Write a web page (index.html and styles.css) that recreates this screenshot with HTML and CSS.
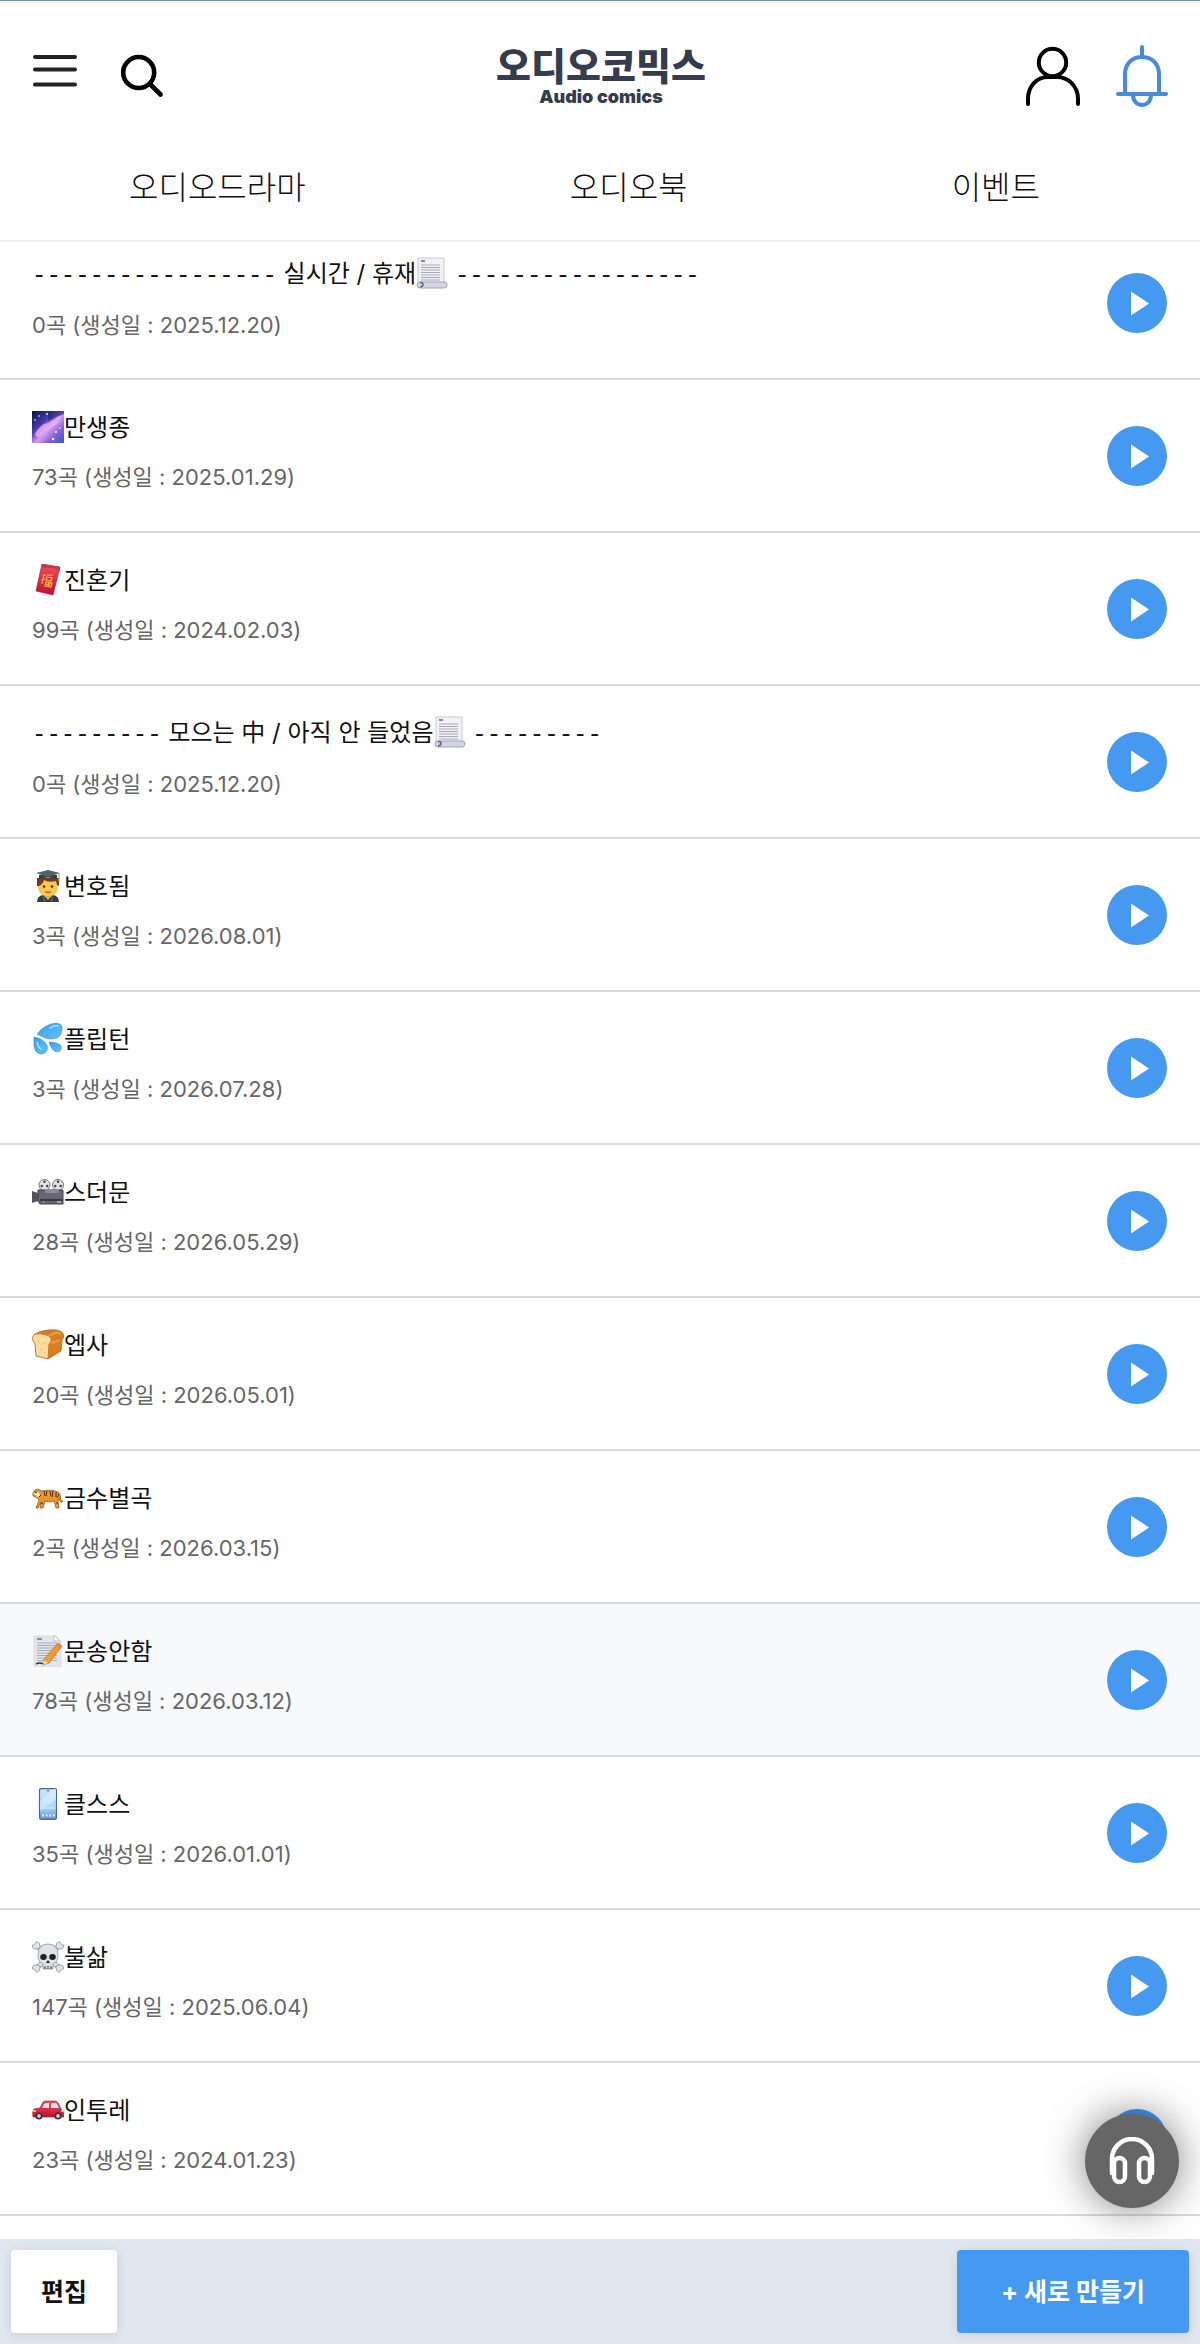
FILE: index.html
```html
<!DOCTYPE html>
<html lang="ko">
<head>
  <meta charset="UTF-8">
  <meta name="viewport" content="width=device-width, initial-scale=1.0">
  <title>오디오코믹스</title>
  <link rel="stylesheet" href="styles.css">
</head>
<body>
  <!-- shared icons -->
  <svg class="sprite" aria-hidden="true">
    <defs>
      <linearGradient id="g-sky" x1="0" y1="0" x2="1" y2="1">
        <stop offset="0" stop-color="#0b0f4d"/><stop offset=".35" stop-color="#4a3aa8"/>
        <stop offset=".55" stop-color="#d79af0"/><stop offset=".75" stop-color="#7b62d8"/><stop offset="1" stop-color="#3d57c4"/>
      </linearGradient>
      <linearGradient id="g-drop" x1="0" y1="0" x2="1" y2="1">
        <stop offset="0" stop-color="#3a9be8"/><stop offset="1" stop-color="#63c4fb"/>
      </linearGradient>
      <linearGradient id="g-phone" x1="0" y1="0" x2="0" y2="1">
        <stop offset="0" stop-color="#c6e8fb"/><stop offset=".6" stop-color="#a8d8fb"/><stop offset="1" stop-color="#5f94dc"/>
      </linearGradient>
      <linearGradient id="g-red" x1="0" y1="0" x2="0" y2="1">
        <stop offset="0" stop-color="#f0505a"/><stop offset="1" stop-color="#c01030"/>
      </linearGradient>
    </defs>
    <symbol id="play" viewBox="0 0 60 60">
      <circle cx="30" cy="30" r="30" fill="#4699f0"/>
      <path d="M24 18.500 42 30.500 24 42.500z" fill="#fff"/>
    </symbol>
    <symbol id="scroll" viewBox="0 0 32 32">
      <path d="M2 1h26v25H2z" fill="#f1f1f7" stroke="#c9c9d6"/>
      <path d="M5 4h4" stroke="#666" stroke-width="1.500"/>
      <path d="M5 8h19M5 10.500h19M5 13h19M5 15.500h19M5 18h19M5 20.500h19M5 23h19" stroke="#a9a9b4"/>
      <path d="M3 25h26q2 0 2 3t-3 3H4q-3 0-3-3t2-3z" fill="#d5d4e6" stroke="#a5a3bd"/>
      <path d="M4 30q3 0 3-3 0-1.500-3-1.500" fill="none" stroke="#66647e" stroke-width="1.500"/>
    </symbol>
    <symbol id="galaxy" viewBox="0 0 32 32">
      <path d="M0 0h32v32H0z" fill="url(#g-sky)"/>
      <path d="M3 23Q8 13 16 12 23 9 29 3 28 13 20 16 13 20 9 25 5 28 3 23z" fill="#efb2f5" opacity=".75"/>
      <path d="M16 0h16v3q-8 3-16 7z" fill="#1b2278" opacity=".6"/>
      <g fill="#fff"><circle cx="7" cy="5" r=".8"/><circle cx="15" cy="3" r=".9"/><circle cx="3" cy="9" r=".8"/><circle cx="24" cy="21" r="1"/><circle cx="21" cy="28" r="1.300"/><circle cx="28" cy="17" r=".8"/></g>
    </symbol>
    <symbol id="envelope" viewBox="0 0 32 32">
      <path d="M10 0 28 3 21 31 4 27z" fill="url(#g-red)" stroke="#a81530" stroke-width=".6"/>
      <path d="M10 0 28 3V8L26 5 9 3z" fill="#c4354a"/>
      <path d="M11 12l3-1M12 10l-2 10M9 16l4-1M15 11h6M15 13l5 1-1 3-5-1zM14 18l6 1-1 4-6-1zM13 20l6 1M17 18l-1 4" fill="none" stroke="#fbb53c" stroke-width="1.200"/>
    </symbol>
    <symbol id="student" viewBox="0 0 32 32">
      <path d="M5 32q0-6 6-7h10q6 1 6 7z" fill="#333a50"/>
      <path d="M11 25l5 5 5-5v-4H11z" fill="#e8a83a"/>
      <path d="M6 9h20v8q0 9-10 9T6 17z" fill="#fbc949"/>
      <path d="M5 16V8h22v8l-2-1-1-4q-8 2-12-1-1 4-5 6z" fill="#6e3b25"/>
      <path d="M7 5v4q9-3 18 0V5z" fill="#2f3c49"/>
      <path d="M4 3 16 0l12 3-12 4z" fill="#52616e"/>
      <path d="M27 3v8" stroke="#d4a340" stroke-width="1.200"/>
      <circle cx="12" cy="16.500" r="1.300" fill="#4b2d1d"/><circle cx="20" cy="16.500" r="1.300" fill="#4b2d1d"/>
      <path d="M13 21.500q3 2 6 0" fill="none" stroke="#a8513c" stroke-width="1.300"/>
      <path d="M11 27l2 5M21 27l-2 5" stroke="#5975a8"/>
    </symbol>
    <symbol id="drops" viewBox="0 0 32 32">
      <g fill="url(#g-drop)" stroke="#2f8cdc" stroke-width=".6">
        <path d="M5 11Q12 2 23 0q8 0 7 7-1 9-11 9Q14 16 5 11z"/>
        <path d="M2 14q10 2 13 8 2 7-5 9-7 0-8-8z"/>
        <path d="M17 19q9 0 12 4 1 5-3 6-6 0-9-10z"/>
      </g>
      <path d="M18 5q5-3 8-2M5 19q1 5 4 7" fill="none" stroke="#a9e1ff" stroke-width="1.500" stroke-linecap="round"/>
    </symbol>
    <symbol id="camera" viewBox="0 0 32 32">
      <circle cx="12.500" cy="9" r="5.500" fill="#e3e3ea" stroke="#777780"/><circle cx="26" cy="9" r="5.500" fill="#e3e3ea" stroke="#777780"/>
      <g fill="#3e3e49"><circle cx="12.500" cy="5.800" r="1.200"/><circle cx="9.800" cy="10" r="1.200"/><circle cx="15.200" cy="10" r="1.200"/><circle cx="26" cy="5.800" r="1.200"/><circle cx="23.300" cy="10" r="1.200"/><circle cx="28.700" cy="10" r="1.200"/></g>
      <path d="M0 15l6 2v8l-6 2z" fill="#55555f"/>
      <path d="M6 14h25v14H8l-2-3z" fill="#676572" stroke="#45434e"/>
      <path d="M13 13h14v4H13z" fill="#8d8b98"/>
      <path d="M8 24h23" stroke="#3a3843" stroke-width="2"/>
      <path d="M11 26h1M25 26h4" stroke="#eee"/>
    </symbol>
    <symbol id="bread" viewBox="0 0 32 32">
      <path d="M3 5Q12 0 24 1q8 1 8 7l-2 3-1 11-13 8-5-19z" fill="#d97f20" stroke="#a85b16" stroke-width=".7"/>
      <path d="M17 7q7-5 12-2M19 14l9-3" fill="none" stroke="#ee9d3d" stroke-width="2"/>
      <path d="M3 5q12-1 16 4 1 4-2 6l-1 15-12-3L3 15Q-2 9 3 5z" fill="#fbdc9e" stroke="#c77a26"/>
      <path d="M6 12l1 1M12 14l1 1M8 20l1 1M12 23l1 1" stroke="#daa65c"/>
    </symbol>
    <symbol id="tiger" viewBox="0 0 32 32">
      <path d="M3 8q2-2 5 0l2 1q10-2 16 1 3 2 3 8 1 2 2 1-1 3-3 0l-1-3-1 4 1 6h-3l-2-7q-5 2-9 0l-2 7h-3l1-6-3 6H4l3-8-3-3Q0 15 1 11z" fill="#e9952a" stroke="#8a5217" stroke-width=".7"/>
      <path d="M1 12q3 0 4 3l3-1q0-4-4-4" fill="#fff1d6"/>
      <circle cx="4" cy="10.500" r=".8"/>
      <path d="M12 9l1 5M15 9l-1 5M18 9l1 5M21 9l-1 6M24 10v5M27 12l-2 4M9 13l-2 2M24 21h2M9 21l2 1" stroke="#4a2b11"/>
    </symbol>
    <symbol id="memo" viewBox="0 0 32 32">
      <path d="M2 1h22l5 6v25H2z" fill="#e3e5ec" stroke="#cdd0da" stroke-width=".6"/>
      <path d="M5 4h5" stroke="#707078" stroke-width="1.500"/>
      <path d="M5 8h20M5 10.500h20M5 13h20M5 15.500h20M5 18h20M5 20.500h20M5 23h20M5 25.500h20" stroke="#aaadb8"/>
      <path d="M22 0v6h6z" fill="#fff" stroke="#a8abb5" stroke-width=".7"/>
      <path d="M26 8l4 3-13 17-6 2 1-6z" fill="#f29a32" stroke="#b96a1b" stroke-width=".7"/>
      <path d="M12 25l4 3-5 2z" fill="#f7d9a8"/><path d="M26 8l4 3-2 3-4-4z" fill="#e8804c"/>
      <path d="M4 29q4-2 7 0" fill="none" stroke="#333" stroke-width="1.500"/>
    </symbol>
    <symbol id="phone" viewBox="0 0 32 32">
      <rect x="7.500" y=".7" width="17" height="30.600" rx="1.500" fill="url(#g-phone)" stroke="#56688a" stroke-width="1.200"/>
      <path d="M8 13 22 1h2v10L8 23z" fill="#e6f6ff" opacity=".5"/>
      <circle cx="16" cy="2.800" r=".8" fill="#333"/>
      <path d="M9 20h14" stroke="#d4edff"/><path d="M10 27.500h13" stroke="#ecf5ff" stroke-width="2" stroke-dasharray="2 1.600"/>
    </symbol>
    <symbol id="skull" viewBox="0 0 32 32">
      <path d="M5 5l22 22M27 5 5 27" stroke="#90979f" stroke-width="5"/>
      <path d="M5 5l22 22M27 5 5 27" stroke="#dfe3e7" stroke-width="3.500"/>
      <g fill="#dfe3e7" stroke="#90979f" stroke-width=".8">
        <path d="M8 7Q8 0 4 1 3 5 0 4q0 6 8 3zM24 7q0-7 4-6 1 4 4 3 0 6-8 3zM8 25q0 7-4 6-1-4-4-3 0-6 8-3zM24 25q0 7 4 6 1-4 4-3 0-6-8-3z"/>
        <path d="M16 3q10 0 10 11 0 7-5 9v5H11v-5q-5-2-5-9Q6 3 16 3z"/>
      </g>
      <ellipse cx="11.500" cy="16" rx="3.300" ry="3" fill="#222"/><ellipse cx="20.500" cy="16" rx="3.300" ry="3" fill="#222"/>
      <path d="M16 19l-2 3h4z" fill="#222"/>
      <path d="M13 25v3M16 25v3M19 25v3" stroke="#4e5357" stroke-width="1.200"/>
    </symbol>
    <symbol id="car" viewBox="0 0 32 32">
      <path d="M1 23q-1-6 1-8l6-1 3-6q1-1 3-1h9q2 0 3 2l3 6q3 2 3 8z" fill="url(#g-red)" stroke="#a5222c" stroke-width=".7"/>
      <path d="M10 14l2-4q1-1 3-1h2v5zM19 9h4q2 0 2 1l2 4h-8z" fill="#dce3ea"/>
      <path d="M1 17h3M29 17h2" stroke="#ffd9c0" stroke-width="1.500"/>
      <circle cx="7" cy="22" r="3.600" fill="#333"/><circle cx="26" cy="22" r="3.600" fill="#333"/>
      <circle cx="7" cy="22" r="1.900" fill="#c9cbd0"/><circle cx="26" cy="22" r="1.900" fill="#c9cbd0"/>
    </symbol>
  </svg>

  <header class="header">
    <div class="top-bar">
      <div class="tools">
        <button class="icon-btn" type="button" aria-label="메뉴">
          <svg width="44" height="72" viewBox="0 0 44 72"><path d="M2 17h40M2 29.500h40M2 44.500h40" stroke="#222" stroke-width="4" stroke-linecap="round"/></svg>
        </button>
        <button class="icon-btn" type="button" aria-label="검색">
          <svg width="42" height="72" viewBox="0 0 42 72"><circle cx="17.700" cy="32.500" r="15.500" fill="none" stroke="#000" stroke-width="4.600"/><path d="M29.500 44.500 39.500 54.500" stroke="#000" stroke-width="4.600" stroke-linecap="round"/></svg>
        </button>
      </div>
      <a class="logo" href="#">
        <span class="logo-name">오디오코믹스</span>
        <span class="logo-sub">Audio comics</span>
      </a>
      <div class="tools tools-right">
        <button class="icon-btn" type="button" aria-label="내 정보">
          <svg width="56" height="72" viewBox="0 0 56 72" fill="none" stroke="#000" stroke-width="4" stroke-linecap="round"><circle cx="27.500" cy="22.500" r="13.700"/><path d="M3 64v-5C3 46 12 37 23 37h9c11 0 21 9 21 22v5"/></svg>
        </button>
        <button class="icon-btn" type="button" aria-label="알림">
          <svg width="54" height="72" viewBox="0 0 54 72" fill="none" stroke="#468be0" stroke-width="4" stroke-linecap="round"><path d="M27 7v10M3 54h48M10 54V34c0-10 7-17 17-17s17 7 17 17v20M18 55c0 6 4 10 9 10s9-4 9-10"/></svg>
        </button>
      </div>
    </div>
    <nav class="nav">
      <a href="#">오디오드라마</a>
      <a href="#">오디오북</a>
      <a href="#">이벤트</a>
    </nav>
  </header>

  <main>
    <ul class="playlist">
      <li class="row">
        <div class="info">
          <p class="title"><span class="dash">-----------------</span> 실시간 / 휴재<svg class="emoji"><use href="#scroll"/></svg> <span class="dash">-----------------</span></p>
          <p class="meta">0곡 (생성일 : 2025.12.20)</p>
        </div>
        <button class="play" type="button" aria-label="재생"><svg><use href="#play"/></svg></button>
      </li>
      <li class="row">
        <div class="info">
          <p class="title"><svg class="emoji"><use href="#galaxy"/></svg>만생종</p>
          <p class="meta">73곡 (생성일 : 2025.01.29)</p>
        </div>
        <button class="play" type="button" aria-label="재생"><svg><use href="#play"/></svg></button>
      </li>
      <li class="row">
        <div class="info">
          <p class="title"><svg class="emoji"><use href="#envelope"/></svg>진혼기</p>
          <p class="meta">99곡 (생성일 : 2024.02.03)</p>
        </div>
        <button class="play" type="button" aria-label="재생"><svg><use href="#play"/></svg></button>
      </li>
      <li class="row">
        <div class="info">
          <p class="title"><span class="dash">---------</span> 모으는 中 / 아직 안 들었음<svg class="emoji"><use href="#scroll"/></svg> <span class="dash">---------</span></p>
          <p class="meta">0곡 (생성일 : 2025.12.20)</p>
        </div>
        <button class="play" type="button" aria-label="재생"><svg><use href="#play"/></svg></button>
      </li>
      <li class="row">
        <div class="info">
          <p class="title"><svg class="emoji"><use href="#student"/></svg>변호됨</p>
          <p class="meta">3곡 (생성일 : 2026.08.01)</p>
        </div>
        <button class="play" type="button" aria-label="재생"><svg><use href="#play"/></svg></button>
      </li>
      <li class="row">
        <div class="info">
          <p class="title"><svg class="emoji"><use href="#drops"/></svg>플립턴</p>
          <p class="meta">3곡 (생성일 : 2026.07.28)</p>
        </div>
        <button class="play" type="button" aria-label="재생"><svg><use href="#play"/></svg></button>
      </li>
      <li class="row">
        <div class="info">
          <p class="title"><svg class="emoji"><use href="#camera"/></svg>스더문</p>
          <p class="meta">28곡 (생성일 : 2026.05.29)</p>
        </div>
        <button class="play" type="button" aria-label="재생"><svg><use href="#play"/></svg></button>
      </li>
      <li class="row">
        <div class="info">
          <p class="title"><svg class="emoji"><use href="#bread"/></svg>엡사</p>
          <p class="meta">20곡 (생성일 : 2026.05.01)</p>
        </div>
        <button class="play" type="button" aria-label="재생"><svg><use href="#play"/></svg></button>
      </li>
      <li class="row">
        <div class="info">
          <p class="title"><svg class="emoji"><use href="#tiger"/></svg>금수별곡</p>
          <p class="meta">2곡 (생성일 : 2026.03.15)</p>
        </div>
        <button class="play" type="button" aria-label="재생"><svg><use href="#play"/></svg></button>
      </li>
      <li class="row active">
        <div class="info">
          <p class="title"><svg class="emoji"><use href="#memo"/></svg>문송안함</p>
          <p class="meta">78곡 (생성일 : 2026.03.12)</p>
        </div>
        <button class="play" type="button" aria-label="재생"><svg><use href="#play"/></svg></button>
      </li>
      <li class="row">
        <div class="info">
          <p class="title"><svg class="emoji"><use href="#phone"/></svg>클스스</p>
          <p class="meta">35곡 (생성일 : 2026.01.01)</p>
        </div>
        <button class="play" type="button" aria-label="재생"><svg><use href="#play"/></svg></button>
      </li>
      <li class="row">
        <div class="info">
          <p class="title"><svg class="emoji"><use href="#skull"/></svg>불삶</p>
          <p class="meta">147곡 (생성일 : 2025.06.04)</p>
        </div>
        <button class="play" type="button" aria-label="재생"><svg><use href="#play"/></svg></button>
      </li>
      <li class="row">
        <div class="info">
          <p class="title"><svg class="emoji"><use href="#car"/></svg>인투레</p>
          <p class="meta">23곡 (생성일 : 2024.01.23)</p>
        </div>
        <button class="play" type="button" aria-label="재생"><svg><use href="#play"/></svg></button>
      </li>
    </ul>
  </main>

  <button class="player-btn" type="button" aria-label="플레이어">
    <svg width="48" height="48" viewBox="0 0 48 48" fill="none" stroke="#fff" stroke-width="4.500">
      <path d="M4 36V22a20 20 0 0 1 40 0v14" stroke-linecap="round"/>
      <rect x="6" y="21" width="11" height="24" rx="5.500"/>
      <rect x="31" y="21" width="11" height="24" rx="5.500"/>
    </svg>
  </button>

  <footer class="actions">
    <button class="btn btn-edit" type="button">편집</button>
    <button class="btn btn-new" type="button">+ 새로 만들기</button>
  </footer>
</body>
</html>
```

FILE: styles.css
```css
* {
  box-sizing: border-box;
}

body {
  margin: 0;
  background-color: #fff;
  color: #111;
  font-family: Inter, "Noto Sans CJK KR", sans-serif;
}

button {
  border: none;
  padding: 0;
  background: none;
  font-family: inherit;
  cursor: pointer;
}

a {
  color: inherit;
  text-decoration: none;
}

svg {
  display: block;
}

.sprite {
  position: absolute;
  width: 0;
  height: 0;
}

/* header */
.header {
  position: sticky;
  top: 0;
  z-index: 2;
  background-color: #fff;
  border-top: 1px solid #7195ad;
  border-bottom: 2px solid #eee;
}

.top-bar {
  display: grid;
  grid-template-columns: 1fr auto 1fr;
  align-items: center;
  height: 133px;
  padding: 17px 31px 0 33px;
}

.tools {
  display: flex;
  gap: 44px;
}

.tools-right {
  justify-content: flex-end;
  gap: 34px;
}

.logo {
  display: flex;
  flex-direction: column;
  align-items: center;
  color: #353c4d;
  font-weight: 900;
}

.logo-name {
  font-size: 38px;
  line-height: 42px;
}

.logo-sub {
  font-size: 18px;
  line-height: 20px;
}

.nav {
  display: flex;
  justify-content: space-between;
  align-items: center;
  height: 106px;
  padding: 0 160px 4px 129px;
  font-size: 32px;
  font-weight: 300;
}

/* list: the first row slides a little under the header */
.playlist {
  list-style: none;
  margin: -15px 0 0;
  padding: 0 0 23px;
}

.row {
  display: flex;
  justify-content: space-between;
  align-items: center;
  height: 153px;
  padding: 0 33px 0 32px;
  border-bottom: 2px solid #dadada;
}

.row.active {
  background-color: #f7f9fb;
}

.info {
  padding-bottom: 6px;
}

.title,
.meta {
  margin: 0;
  line-height: 36px;
}

.title {
  margin-bottom: 13px;
  font-size: 24px;
}

.meta {
  color: #666;
  font-size: 22px;
}

.dash {
  font-family: "Liberation Mono", monospace;
}

.emoji {
  display: inline-block;
  width: 32px;
  height: 32px;
  vertical-align: middle;
  margin-top: -4px;
}

.play svg {
  width: 60px;
  height: 60px;
}

.player-btn {
  position: fixed;
  right: 21px;
  bottom: 136px;
  z-index: 3;
  display: flex;
  justify-content: center;
  align-items: center;
  width: 94px;
  height: 94px;
  border-radius: 50%;
  background-color: #666;
  box-shadow: 0 0 40px rgba(0, 0, 0, 0.5);
}

/* bottom bar */
.actions {
  position: sticky;
  bottom: 0;
  z-index: 2;
  display: flex;
  justify-content: space-between;
  padding: 11px;
  background-color: #e0e7ee;
}

.btn {
  height: 83px;
  border-radius: 4px;
  box-shadow: 0 2px 12px rgba(0, 0, 0, 0.1);
  font-size: 25px;
  font-weight: bold;
}

.btn-edit {
  padding: 0 30px 4px;
  background-color: #fff;
  color: #111;
}

.btn-new {
  padding: 0 44px 4px;
  background-color: #4699f0;
  color: #fff;
}
```
